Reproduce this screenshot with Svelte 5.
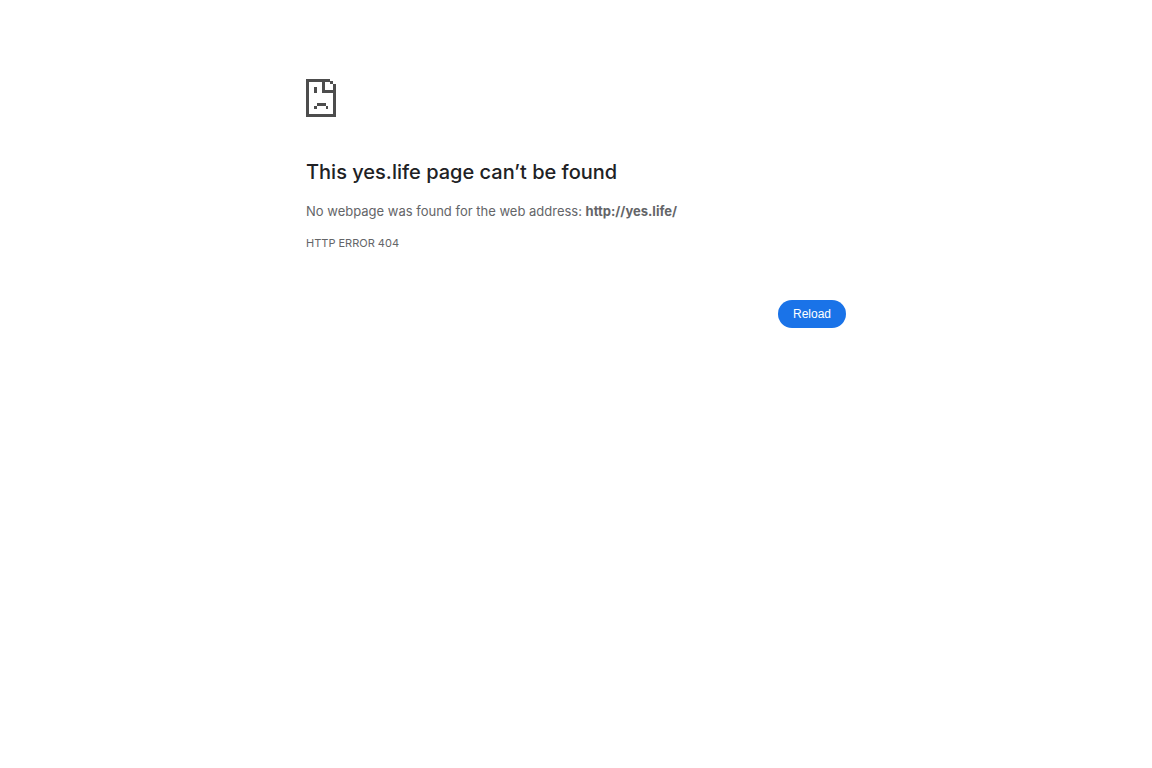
<script>
    let host = 'yes.life';
    let errorCode = 'HTTP ERROR 404';

    function reload() {
        window.location.reload();
    }
</script>

<main class="interstitial">
    <svg class="icon" viewBox="0 0 30 38" aria-hidden="true" shape-rendering="crispEdges">
        <path fill="#4d4d4d" fill-rule="evenodd" d="M0 0H24V2H27V5H30V38H0ZM3 3V35H27V14H16V3ZM19 3V11H27V5H24V3Z" />
        <path fill="#4d4d4d" d="M8 8H11V14H8ZM11 24H20V27H11ZM8 27H11V30H8ZM20 27H22V30H20Z" />
    </svg>

    <h1>This {host} page can’t be found</h1>
    <p class="summary">No webpage was found for the web address: <strong>http://{host}/</strong></p>
    <div class="error-code">{errorCode}</div>

    <div class="buttons">
        <button type="button" on:click={reload}>Reload</button>
    </div>
</main>

<style>
    :global(body) {
        margin: 0;
        background: #fff;
    }

    .interstitial {
        box-sizing: border-box;
        max-width: 540px;
        margin: 0 auto;
        padding-top: 79px;
        color: #646568;
        font-family: Inter, 'Liberation Sans', sans-serif;
        font-size: 13px;
        line-height: 20px;
    }

    .icon {
        display: block;
        width: 30px;
        height: 38px;
    }

    h1 {
        margin: 42px 0 16px;
        color: #202124;
        font-size: 20px;
        font-weight: 500;
        line-height: 26px;
    }

    .summary {
        margin: 0;
    }

    .error-code {
        margin-top: 12px;
        font-size: 11px;
    }

    .buttons {
        display: flex;
        justify-content: flex-end;
        margin-top: 47px;
    }

    button {
        padding: 0 15px;
        border: 0;
        border-radius: 14px;
        background: #1a73e8;
        color: #fff;
        font-family: 'Liberation Sans', Arial, sans-serif;
        font-size: 12px;
        line-height: 28px;
        cursor: pointer;
    }
</style>
